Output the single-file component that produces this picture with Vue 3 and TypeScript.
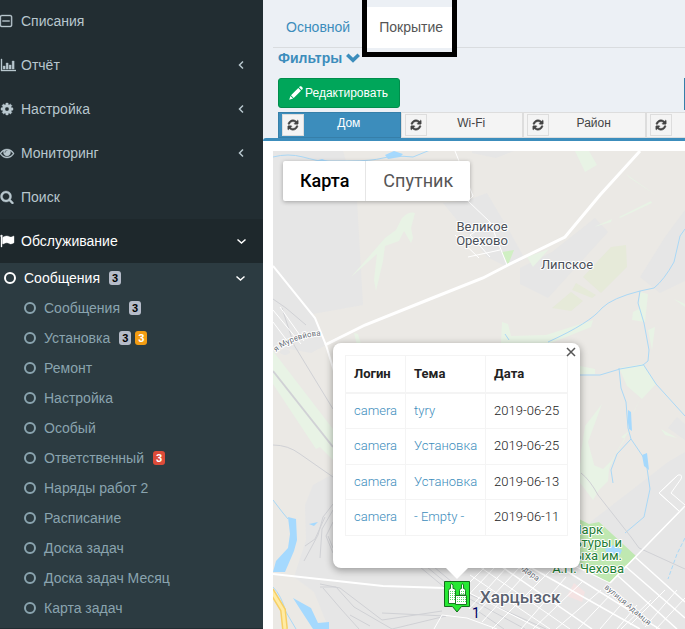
<script setup lang="ts">
interface MenuItem {
  label: string
  icon: string
  arrow?: boolean
}
interface Badge {
  text: string
  tone: 'gray' | 'orange' | 'red'
}
interface SubItem {
  label: string
  badges?: Badge[]
}
interface MessageRow {
  login: string
  theme: string
  date: string
}

const refreshPath =
  'M1639 1056q0 5-1 7-64 268-268 434.500t-478 166.500q-146 0-282.500-55t-243.500-157l-129 129q-19 19-45 19t-45-19-19-45v-448q0-26 19-45t45-19h448q26 0 45 19t19 45-19 45l-137 137q71 66 161 102t187 36q134 0 250-65t186-179q11-17 53-117 8-23 30-23h192q13 0 22.500 9.500t9.500 22.500zm25-800v448q0 26-19 45t-45 19h-448q-26 0-45-19t-19-45 19-45l138-138q-148-137-349-137-134 0-250 65t-186 179q-11 17-53 117-8 23-30 23h-199q-13 0-22.500-9.500t-9.500-22.500v-7q65-268 270-434.500t480-166.500q146 0 284 55.500t245 156.500l130-129q19-19 45-19t45 19 19 45z'

const icons: Record<string, string> = {
  cog: 'M1152 896q0-106-75-181t-181-75-181 75-75 181 75 181 181 75 181-75 75-181zm512-109v222q0 12-8 23t-20 13l-185 28q-19 54-39 91 35 50 107 138 10 12 10 25t-9 23q-27 37-99 108t-94 71q-12 0-26-9l-138-108q-44 23-91 38-16 136-29 186-7 28-36 28h-222q-14 0-24.500-8.500t-11.500-21.500l-28-184q-49-16-90-37l-141 107q-10 9-25 9-14 0-25-11-126-114-165-168-7-10-7-23 0-12 8-23 15-21 51-66.500t54-70.500q-27-50-41-99l-183-27q-13-2-21-12.500t-8-23.500v-222q0-12 8-23t19-13l186-28q14-46 39-92-40-57-107-138-10-12-10-24 0-10 9-23 26-36 98.500-107.500t94.500-71.500q13 0 26 10l138 107q44-23 91-38 16-136 29-186 7-28 36-28h222q14 0 24.500 8.500t11.500 21.500l28 184q49 16 90 37l142-107q9-9 24-9 13 0 25 10 129 119 165 170 7 8 7 22 0 12-8 23-15 21-51 66.500t-54 70.500q26 50 41 98l183 28q13 2 21 12.500t8 23.500z',
  eye: 'M1664 960q-152-236-381-353 61 104 61 225 0 185-131.500 316.500t-316.500 131.500-316.500-131.500-131.500-316.500q0-121 61-225-229 117-381 353 133 205 333.500 326.500t434.500 121.500 434.500-121.500 333.500-326.500zm-720-384q0-20-14-34t-34-14q-125 0-214.500 89.500t-89.500 214.500q0 20 14 34t34 14 34-14 14-34q0-86 61-147t147-61q20 0 34-14t14-34zm848 384q0 34-20 69-140 230-376.500 368.500t-499.500 138.500-499.500-139-376.500-368q-20-35-20-69t20-69q140-229 376.500-368t499.500-139 499.500 139 376.500 368q20 35 20 69z',
  search:
    'M1216 832q0-185-131.500-316.500t-316.500-131.500-316.500 131.500-131.500 316.500 131.500 316.500 316.500 131.500 316.500-131.500 131.500-316.500zm512 832q0 52-38 90t-90 38q-54 0-90-38l-343-342q-179 124-399 124-143 0-273.500-55.500t-225-150-150-225-55.500-273.500 55.500-273.500 150-225 225-150 273.500-55.500 273.500 55.500 225 150 150 225 55.500 273.500q0 220-124 399l343 343q37 37 37 90z',
  flag: 'M320 256q0 72-64 110v1266q0 13-9.500 22.500t-22.500 9.500h-64q-13 0-22.500-9.500t-9.500-22.500v-1266q-64-38-64-110 0-53 37.500-90.500t90.500-37.500 90.500 37.500 37.500 90.500zm1472 64v763q0 25-12.500 38.500t-39.500 27.500q-215 116-369 116-61 0-123.500-22t-108.500-48-115.500-48-142.500-22q-192 0-464 146-17 9-33 9-26 0-45-19t-19-45v-742q0-32 31-55 21-14 79-43 236-120 421-120 107 0 200 29t219 88q38 19 88 19 54 0 117.500-21t110-47 88-47 54.500-21q26 0 45 19t19 45z',
  chart:
    'M128 128h128v1408h1792v128H128zM400 1024h256v384H400zM784 640h256v768H784zM1168 896h256v512h-256zM1552 384h256v1024h-256z',
  minus:
    'M256 128h1024q128 0 200 72t72 200v992q0 128-72 200t-200 72H256q-128 0-200-72t-72-200V400q0-128 72-200t200-72zm0 128q-144 0-144 144v992q0 144 144 144h1024q144 0 144-144V400q0-144-144-144zM320 832h896v128H320z',
}

const menu: MenuItem[] = [
  { label: 'Списания', icon: 'minus' },
  { label: 'Отчёт', icon: 'chart', arrow: true },
  { label: 'Настройка', icon: 'cog', arrow: true },
  { label: 'Мониторинг', icon: 'eye', arrow: true },
  { label: 'Поиск', icon: 'search' },
]

const subItems: SubItem[] = [
  { label: 'Сообщения', badges: [{ text: '3', tone: 'gray' }] },
  { label: 'Установка', badges: [{ text: '3', tone: 'gray' }, { text: '3', tone: 'orange' }] },
  { label: 'Ремонт' },
  { label: 'Настройка' },
  { label: 'Особый' },
  { label: 'Ответственный', badges: [{ text: '3', tone: 'red' }] },
  { label: 'Наряды работ 2' },
  { label: 'Расписание' },
  { label: 'Доска задач' },
  { label: 'Доска задач Месяц' },
  { label: 'Карта задач' },
]

const layers: string[] = ['Дом', 'Wi-Fi', 'Район', '']

const rows: MessageRow[] = [
  { login: 'camera', theme: 'tyry', date: '2019-06-25' },
  { login: 'camera', theme: 'Установка', date: '2019-06-25' },
  { login: 'camera', theme: 'Установка', date: '2019-06-13' },
  { login: 'camera', theme: '- Empty -', date: '2019-06-11' },
]
</script>

<template>
  <div class="page">
    <nav class="sidebar">
      <a v-for="item in menu" :key="item.label" href="#" class="item">
        <svg class="icon" viewBox="0 0 2048 1792"><path :d="icons[item.icon]" fill-rule="evenodd" /></svg>
        <span>{{ item.label }}</span>
        <svg v-if="item.arrow" class="arrow" viewBox="0 0 12 12"><path d="M8 2.500L4.500 6 8 9.500" /></svg>
      </a>
      <a href="#" class="item current">
        <svg class="icon" viewBox="0 0 2048 1792"><path :d="icons.flag" /></svg>
        <span>Обслуживание</span>
        <svg class="arrow" viewBox="0 0 12 12"><path d="M2.500 4.500l4 3.500 4-3.500" /></svg>
      </a>
      <div class="tree">
        <a href="#" class="sub open">
          <i class="ring"></i>
          <span>Сообщения</span>
          <b class="badge gray">3</b>
          <svg class="arrow" viewBox="0 0 12 12"><path d="M2.500 4.500l4 3.500 4-3.500" /></svg>
        </a>
        <a v-for="item in subItems" :key="item.label" href="#" class="sub nested">
          <i class="ring"></i>
          <span>{{ item.label }}</span>
          <b v-for="(badge, n) in item.badges" :key="n" class="badge" :class="badge.tone">{{ badge.text }}</b>
        </a>
      </div>
    </nav>

    <main class="content">
      <div class="tabs">
        <a href="#" class="tab">Основной</a>
        <a href="#" class="tab active">Покрытие<i class="frame"></i></a>
      </div>
      <a href="#" class="filters">
        Фильтры
        <svg class="chevron" viewBox="0 0 14 10"><path d="M0 3l2.500-2.500L7 4.800l4.500-4.300L14 3 7 9.800z" /></svg>
      </a>
      <div class="actions">
        <button type="button" class="edit">
          <svg class="pencil" viewBox="0 0 14 14">
            <path d="M10 1.300l1-1h1.200l1.500 1.500V3l-1 1zM9.300 2l2.700 2.700-7.300 7.300L2 9.300zM1.400 9.900l2.700 2.700L.2 13.800z" />
          </svg>
          Редактировать
        </button>
        <button type="button" class="edge" aria-label="+"></button>
      </div>
      <div class="layers">
        <div v-for="(layer, n) in layers" :key="n" class="layer" :class="{ selected: n === 0 }">
          <button type="button" class="refresh" aria-label="↻">
            <svg viewBox="0 0 1792 1792"><path :d="refreshPath" /></svg>
          </button>
          <a href="#">{{ layer }}</a>
        </div>
      </div>

      <section class="panel">
        <div class="map">
          <svg class="canvas" viewBox="273 151 412 478" preserveAspectRatio="xMinYMin slice">
            <rect x="273" y="151" width="2000" height="2000" fill="#ebe9e5" />
            <g fill="#e6e6e6">
              <path d="M273 151h70l14 49 6 105-50 9 13 31-15 8-38-7z" />
              <path d="M443 203l25-3 19-7 23 39 15 27-18 8-20-10z" />
              <path d="M520 268l32-16 43-34 13 14-60 66-28-14z" />
              <path d="M640 277l25-40 20-27v71l-25 12z" />
              <path d="M472 151h42l-18 7-24-5z" />
              <path d="M333 474l-20 11-8 20 1 35-12 37 20 15 15 37h356V452l-17 10-88 68-20-60z" />
              <path d="M668 428l9-11 8 7v16z" />
              <ellipse cx="285" cy="352" rx="5" ry="3" />
            </g>
            <g fill="#e8f3e5">
              <path d="M351 277l14-16 20-23 11-8 6-12q7-7 13-5l-4 15 2 10-2 5-7-12-5 10-14 5-2 15-7 30-2-11 3-26-9 8z" />
              <path d="M575 151h14l8 14-12 7zM626 174l31 22-27-18zM619 217l32-16 1 2-32 15zM594 227l18-8-1 3zM527 257l22-8-16 18z" />
              <path d="M501 343l1-21 6 2 3 12 35-1 47-15-2 7-40 16z" />
              <path d="M640 292l8 2-3 28-13-2 1-8 6-3zM648 330l7-3-3 23zM674 299l11 5v3z" />
              <path d="M273 351l60 78v31l-13-13-4 2-43-65zM354 333l4 1 4 13-5-2z" />
              <path d="M619 368l24-4 13 20-14 15-15-13zM602 404l-14 38 7 26-14 2v-18l4-26zM640 399l-8 16 2-3zM661 429l16 9-12-3zM580 366l15 3v5h-15zM581 458l5 4 17 7 9-9 13-21-4-2 8-6-12 20-8 18-1 12-9 9-6 10-15-20z" />
            </g>
            <path fill="#e6ead9" d="M611 247l15-2 1 22-26 26-18-16zM576 283l20 12-4 3-20-8zM552 308l19-16 12 9-12 10z" />
            <path fill="#d0efc3" d="M502 252l12-2-6 15z" />
            <path fill="#bfe8b1" d="M579 519l10 5 10-2 37 34-27 27-30-18z" />
            <path fill="#f4e3e3" d="M574 583l11 9-3 10-15-6z" />
            <g fill="#a5d9fe">
              <path d="M385 155l9-4 9 3-3 3-12 2zM315 161l7-2 6 2zM288 517l8 2 1 21-3 11-9 21h-12l3-11 12-13 2-14zM309 524l9-2-4 4zM293 598l18 10 7 15 11-1v7h-16l-13-20zM605 549l8-4 9 5-2 5-13-1zM628 410l3 2 1 19-3-2-1-6zM642 455l5-2 2 17-5-4z" />
            </g>
            <g fill="none" stroke="#aad8f6">
              <path d="M273 157q15-4 30 0t18 4 27 0 35-3 30-1l22-9M685 229l-5 7-6 26q-10 18-20 26l-14 3q-28 7-38 17-12 15-54 34M640 291l-2 12 6 20 5 27-1 11-5 4-23 4-20 6h-20M643 364l13 20 29 32M619 368l2 20 5 14 2 26 3 11 15 22 4 28-6 28-19 16M631 439l-14 15-6 16 2 13M505 334l4 6M273 500l10 13 5 6M273 587q8 8 13 25l10 17" />
              <path d="M685 538l-8 16-9 25" stroke-dasharray="4 2" />
            </g>
            <g fill="none" stroke="#d0d1d5">
              <path d="M273 371l60 76" stroke-width="2" />
              <path d="M273 299l13 9 20 17M282 308l12 37 39 64M273 445q15 0 27 9l33 23M581 473q9 7 17 22l33 42 8 11 46 21" />
              <path d="M333 504l-10 13-5 18-14 26M333 510l-11 19-2 29M325 517l-10 22-10 7M333 522l-7 14 7 17M328 536l5 12M320 587h16l18 20 38 22M323 588l18 21 18 20M320 584l20 4 42 32 60-9M350 615l20 11M420 567l30 25 54 37M427 567l30 25 68 37M434 567l30 25 82 37M382 613l64 3-54 13" />
            </g>
            <g fill="none" stroke="#fff">
              <path d="M325 345l40-20 65-26 53-21 25-13 57-28 35-42 40-44" stroke-width="3" />
              <path d="M273 266l42 52 11 27 8 26M273 574l110 12 62 2" stroke-width="2" />
              <path d="M455 151l18 45-5 5 22 21 17 43M490 222l-20 13M470 235l20 22M468 257l32-7M455 235l24 23" />
              <path d="M273 310l28 34M273 322l18 24M280 307l24 34" />
              <path d="M610 583l75-77M610 583l-46-22M679 511l-20-18 19-18q5-1 3 4l-10 14 14 12M679 511l-20-18M659 493l19-18" stroke-width="1" />
              <path d="M610 583l75-77M560 567l125 78M530 567l110 62M502 567l90 62M635 557l50 45M625 566l60 52M617 575l60 54" stroke-width="1.500" />
              <path d="M485 567l-30 30M495 567l-36 38M507 567l-38 42M520 567l-45 48M532 567l-50 55M550 571l-58 58M566 577l-45 52M583 581l-50 48M601 590l-45 39M613 592l-35 37M625 600l-25 29M637 605l-20 24M651 600l-30 29M665 590l-35 35M677 590l-32 37M685 598l-29 31M470 575l80 54M448 582l92 47M480 567l90 62" />
              <path d="M442 615l25 3 30 11M442 615l-8 14" />
            </g>
            <path d="M271 590l12 20 2 19" fill="none" stroke="#f6cf65" stroke-width="6" />
            <path d="M271 590l12 20 2 19" fill="none" stroke="#ffeba4" stroke-width="3" />
            <g class="label" text-anchor="middle">
              <text x="482" y="231">Великое</text>
              <text x="482" y="245">Орехово</text>
              <text x="567" y="269">Липское</text>
            </g>
            <text class="label city" x="480" y="603">Харцызск</text>
            <g class="label park" text-anchor="end">
              <text x="603" y="534">Парк</text>
              <text x="622" y="547">культуры и</text>
              <text x="622" y="560">отдыха им.</text>
              <text x="624" y="573">А.П. Чехова</text>
            </g>
            <defs>
              <path id="street-a" d="M276 352q18-15 50-17" />
              <path id="street-b" d="M604 588l66 56" />
              <path id="street-c" d="M518 567l40 30" />
            </defs>
            <g class="label street">
              <text><textPath href="#street-a">я Муревйова</textPath></text>
              <text><textPath href="#street-b">вулиця Адамця</textPath></text>
              <text><textPath href="#street-c">Ндара</textPath></text>
            </g>
          </svg>

          <div class="types">
            <button type="button" class="chosen">Карта</button>
            <button type="button">Спутник</button>
          </div>

          <div class="marker">
            <svg viewBox="0 0 26 32">
              <path d="M.5 .5h25v25h-8L13 31l-4.500-5.500h-8z" fill="#27e833" stroke="#136b1b" />
              <g fill="#fff" stroke="#197a22">
                <path d="M4.500 22.500v-13l1-2h1V4l1-1.500L9 4v3.500h1.500l1 2v13zM15.500 14V9.500l1-2h1V4l1-1.500 1 1.500v3.500h1l1 2V14z" />
                <path d="M11.500 14.500h11v9h-11z" />
              </g>
              <path d="M6 10.500h5M6 12.500h5M6 14.500h5M6 16.500h5M6 18.500h5M17 10.500h4M17 12.500h4M13 16.500h9M13 18.500h9M13 20.500h9" stroke="#58df65" stroke-dasharray="1 1" />
            </svg>
            <span>1</span>
          </div>

          <div class="popup">
            <button type="button" class="close" aria-label="×">
              <svg viewBox="0 0 10 10"><path d="M1 1l8 8M9 1L1 9" /></svg>
            </button>
            <table>
              <thead>
                <tr><th>Логин</th><th>Тема</th><th>Дата</th></tr>
              </thead>
              <tbody>
                <tr v-for="(row, n) in rows" :key="n">
                  <td><a href="#">{{ row.login }}</a></td>
                  <td><a href="#">{{ row.theme }}</a></td>
                  <td>{{ row.date }}</td>
                </tr>
              </tbody>
            </table>
          </div>
        </div>
      </section>
    </main>
  </div>
</template>

<style>
body {
  margin: 0;
  overflow: hidden;
}
</style>

<style scoped>
* {
  box-sizing: border-box;
}
a {
  text-decoration: none;
  color: #3c8dbc;
}
button {
  font: inherit;
  margin: 0;
  padding: 0;
  border: 0;
}
.page {
  display: flex;
  min-height: 100vh;
  background: #ecf0f5;
  font: 14px/20px "Liberation Sans", Arial, sans-serif;
}
.sidebar {
  flex: 0 0 263px;
  margin-top: -1px;
  background: #222d32;
}
.item {
  display: flex;
  align-items: center;
  height: 44px;
  padding-right: 16px;
  color: #b8c7ce;
}
.icon {
  width: 16px;
  height: 14px;
  margin-right: 5px;
  fill: currentColor;
  stroke: currentColor;
  stroke-width: 48;
}
.arrow {
  width: 12px;
  height: 12px;
  margin-left: auto;
  fill: none;
  stroke: currentColor;
  stroke-width: 1.500;
}
.current {
  background: #1e282c;
  color: #fff;
}
.tree {
  padding-bottom: 5px;
  background: #2c3b41;
}
.sub {
  display: flex;
  align-items: center;
  height: 30px;
  color: #8aa4af;
}
.open {
  padding: 0 17px 0 4px;
  color: #fff;
}
.nested {
  padding-left: 24px;
}
.ring {
  width: 12px;
  height: 12px;
  margin-right: 8px;
  border: 2px solid;
  border-radius: 50%;
}
.badge {
  height: 14px;
  margin-left: 4px;
  padding: 0 3px;
  border-radius: 3px;
  font-size: 11px;
  line-height: 14px;
  color: #fff;
}
.sub span {
  margin-right: 5px;
}
.gray {
  background: #b5bbc8;
  color: #000;
}
.orange {
  background: #f39c12;
}
.red {
  background: #dd4b39;
}
.content {
  flex: 1;
  min-width: 0;
  display: flex;
  flex-direction: column;
  overflow: hidden;
}
.tabs {
  display: flex;
  gap: 3px;
  height: 48px;
  margin-left: 10px;
  padding-top: 7px;
  border-bottom: 1px solid #d9dcdf;
}
.tab {
  padding: 10px 13px;
}
.active {
  position: relative;
  height: 41px;
  background: #fff;
  color: #555;
}
.frame {
  position: absolute;
  inset: -12px -1px -9px -4px;
  border: 5px solid #000;
}
.filters {
  display: flex;
  align-items: center;
  gap: 4px;
  padding-left: 15px;
  font-weight: bold;
}
.chevron {
  width: 14px;
  height: 10px;
  fill: #3c8dbc;
}
.actions {
  display: flex;
  justify-content: space-between;
  padding: 10px 0 2px 15px;
}
.edit {
  display: flex;
  align-items: center;
  gap: 2px;
  height: 30px;
  padding: 0 11px 0 10px;
  border: 1px solid #008d4c;
  border-radius: 3px;
  background: #00a65a;
  color: #fff;
  font-size: 12px;
}
.pencil {
  width: 14px;
  height: 14px;
  fill: #fff;
}
.edge {
  width: 1px;
  height: 32px;
  background: #367fa9;
}
.layers {
  display: flex;
  margin-left: 15px;
}
.layer {
  display: flex;
  flex: 0 0 30.1%;
  height: 26px;
  padding: 1px 3px;
  border: 1px solid #ddd;
  background: #f4f4f4;
  font-size: 12px;
}
.layer a {
  flex: 1;
  padding-right: 3px;
  line-height: 18px;
  text-align: center;
  color: #444;
}
.refresh {
  width: 22px;
  height: 22px;
  border: 1px solid #ddd;
  background: #f4f4f4;
}
.refresh svg {
  display: block;
  width: 12px;
  height: 12px;
  margin: auto;
  fill: #444;
  stroke: #444;
  stroke-width: 80;
}
.selected {
  border-color: #367fa9;
  background: #3c8dbc;
}
.selected a {
  color: #fff;
}
.panel {
  flex: 1;
  display: flex;
  padding: 10px 0 0 10px;
  border-top: 3px solid #3c8dbc;
  border-top-left-radius: 3px;
  background: #fff;
}
.map {
  position: relative;
  flex: 1;
  overflow: hidden;
  font-family: Roboto, sans-serif;
}
.canvas {
  position: absolute;
  width: 100%;
  height: 100%;
}
.label {
  font: 13px Roboto, sans-serif;
  fill: #4a4f58;
  stroke: #fff;
  stroke-width: 2px;
  stroke-linejoin: round;
  paint-order: stroke;
}
.city {
  font-size: 17px;
  font-weight: 500;
  fill: #5b6270;
}
.park {
  fill: #1f8035;
}
.street {
  font-size: 8px;
  fill: #6a7078;
}
.types {
  position: absolute;
  top: 10px;
  left: 10px;
  display: flex;
  border-radius: 2px;
  background: #fff;
  box-shadow: 0 1px 4px rgba(0, 0, 0, 0.3);
}
.types button {
  height: 40px;
  padding: 0 17px;
  background: none;
  color: #565656;
  font-size: 18px;
}
.types button + button {
  box-shadow: -1px 0 #e6e6e6;
}
.types .chosen {
  color: #000;
  font-weight: 500;
}
.marker {
  position: absolute;
  left: 171px;
  top: 430px;
}
.marker svg {
  display: block;
  width: 26px;
  height: 32px;
}
.marker span {
  position: absolute;
  left: 28px;
  top: 22px;
  color: #000066;
  font-size: 14px;
}
.popup {
  position: absolute;
  left: 60px;
  top: 192px;
  padding: 12px 12px 32px;
  border-radius: 8px;
  background: #fff;
  box-shadow: 0 2px 7px 1px rgba(0, 0, 0, 0.3);
}
.popup::after {
  content: "";
  position: absolute;
  left: 50%;
  top: 100%;
  margin-left: -11px;
  border: 11px solid transparent;
  border-top-color: #fff;
  border-bottom: 0;
}
.close {
  position: absolute;
  top: 4px;
  right: 4px;
  width: 10px;
  height: 10px;
  background: none;
}
.close svg {
  display: block;
  stroke: #555;
  stroke-width: 1.500;
}
table {
  border-collapse: collapse;
  color: #222;
  font-size: 13px;
  font-weight: 300;
  line-height: 1.42;
}
th,
td {
  padding: 8px;
  border: 1px solid #f4f4f4;
  text-align: left;
}
th {
  border-bottom-width: 2px;
  font-weight: 700;
  line-height: 20px;
}
</style>
